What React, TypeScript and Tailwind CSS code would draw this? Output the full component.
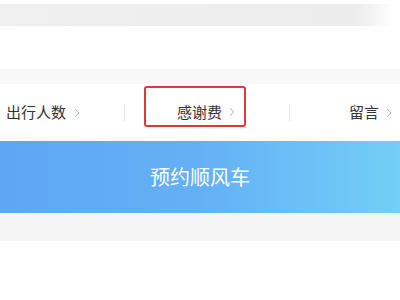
export default function App() {
  const font = { fontFamily: '"Noto Sans CJK SC", "Noto Sans", sans-serif' }

  return (
    <div className="w-[400px] h-[300px] bg-white overflow-hidden" style={font}>
      {/* 顶部模糊条 */}
      <div className="pt-[4px] h-[69px]">
        <div className="h-[22px] w-[395px] bg-gradient-to-r from-[#f0f0f0] via-[#ececec] via-90% to-white" />
      </div>

      <div className="h-[15px] bg-[#f8f8f8]" />

      {/* 选项行 */}
      <div className="h-[57px] flex items-center text-[15px] text-[#333]">
        <div className="w-[124px] flex items-center pl-[6px] gap-[8px]">
          <span>出行人数</span>
          <Chevron />
        </div>
        <div className="w-px h-[17px] bg-[#e5e5e5]" />
        <div className="flex-1 flex justify-start pl-[19px]">
          <div className="w-[102px] h-[41px] -mt-[12px] pt-[11px] border-2 border-[#e8353a] rounded-[3px] flex items-center justify-end pr-[9px] gap-[7px]">
            <span>感谢费</span>
            <Chevron />
          </div>
        </div>
        <div className="w-px h-[17px] bg-[#e5e5e5]" />
        <div className="w-[110px] flex items-center justify-end pr-[8px] gap-[7px]">
          <span>留言</span>
          <Chevron />
        </div>
      </div>

      {/* 预约按钮 */}
      <div className="h-[72px] flex items-center justify-center bg-gradient-to-r from-[#5fa6f4] via-[#64b0f6] via-50% to-[#72cff6] text-white text-[20px]">
        预约顺风车
      </div>

      <div className="h-[28px] bg-[#f5f5f5]" />
    </div>
  )
}

function Chevron() {
  return (
    <svg viewBox="0 0 8 12" className="w-[6px] h-[10px] text-[#aaa]" fill="none" stroke="currentColor" strokeWidth={1.3}>
      <path d="M1.5 1l5 5-5 5" />
    </svg>
  )
}
